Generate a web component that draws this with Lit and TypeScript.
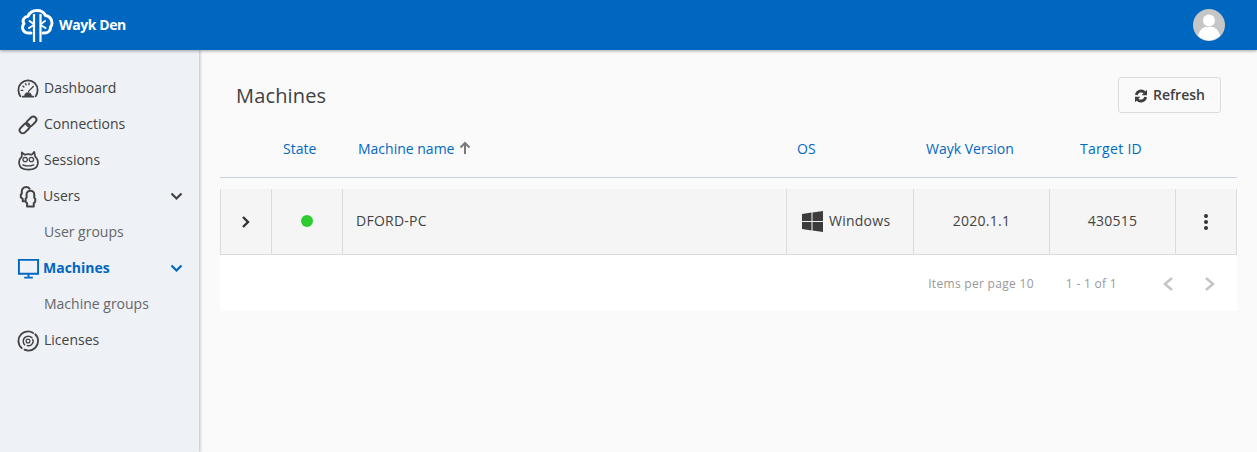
import { LitElement, html, css, svg } from "lit";
import { customElement } from "lit/decorators.js";

const icons: Record<string, unknown> = {
  dashboard: svg`<path d="M3.500 20C2.200 18.200 1.500 16 1.500 13.500 1.500 8 6 3.500 11.500 3.500S21.500 8 21.500 13.500c0 2.500-.7 4.700-2 6.500M6 20.500h11" fill="none" stroke="currentColor" stroke-width="1.900" stroke-linecap="round"/><path d="M12 15l5-5M6 9.500l1.200 1M9 7l.5 1.300M12.500 6.500v1.500M4.500 14h1.500" fill="none" stroke="currentColor" stroke-width="1.400" stroke-linecap="round"/><path d="M7.500 20c0-2.500 1.800-4 4-4s4 1.500 4 4z" fill="currentColor"/>`,
  link: svg`<g fill="none" stroke="currentColor" stroke-width="2" transform="rotate(-45 11.500 12.500)"><rect x="0.500" y="9.200" width="12" height="6.600" rx="3.300"/><rect x="10.500" y="9.200" width="12" height="6.600" rx="3.300"/></g>`,
  owl: svg`<path d="M5 3.500l3 2.500c2.400-.8 5-.8 7.400 0L18 3l1 5c2.200 2 3.100 4.700 2.700 7.500-.6 4-4.500 6-9.700 6s-9.200-2-9.700-6C1.900 12.700 2.800 10 5 8z" fill="none" stroke="currentColor" stroke-width="1.800" stroke-linejoin="round"/><circle cx="8.500" cy="11" r="2.300" fill="none" stroke="currentColor" stroke-width="1.300"/><circle cx="15" cy="11" r="2.300" fill="none" stroke="currentColor" stroke-width="1.300"/><path d="M6 16.500c3.500 1.500 8 1.500 11.500 0" fill="none" stroke="currentColor" stroke-width="1.300" stroke-linecap="round"/>`,
  users: svg`<path d="M7.500 17H6v-2.500l-2-1.800V10l1-1V6.500C5 4 7 2 9.500 2c1.500 0 2.800.7 3.600 1.800" fill="none" stroke="currentColor" stroke-width="2.100" stroke-linejoin="round" stroke-linecap="round"/><path d="M10.500 22.500V19L9 17.500v-3.300l1-1V10c0-2.300 1.900-4 4-4s4 1.700 4 4v3.200l1 1v3.300L17.500 19v3.500z" fill="none" stroke="currentColor" stroke-width="2.100" stroke-linejoin="round"/>`,
  monitor: svg`<path d="M2 3h20v14.500H2z" fill="none" stroke="currentColor" stroke-width="2"/><path d="M12 17.500v4M7.500 21.500h9" fill="none" stroke="currentColor" stroke-width="2"/>`,
  license: svg`<path d="M5 20C2.900 18.100 1.500 15.500 1.500 12.500 1.500 7 6 2.500 11.500 2.500c2 0 3.800.6 5.300 1.600M19 5.500c2 1.800 3 4.300 3 7 0 5.500-4.500 10-10 10-1.500 0-2.900-.3-4.200-.9" fill="none" stroke="currentColor" stroke-width="1.900" stroke-linecap="round"/><path d="M8 16.500c-2-2-2-5.500 0-7.500s5.500-2 7.500 0M16.500 11c.7 2.200 0 4.500-2 5.800-1.200.7-2.500.8-3.700.5" fill="none" stroke="currentColor" stroke-width="1.500" stroke-linecap="round"/><circle cx="11.500" cy="12.500" r="2" fill="none" stroke="currentColor" stroke-width="1.300"/>`,
};

const chevron = html`<svg class="chev" width="14" height="10" viewBox="0 0 14 10"><path d="M1.500 2.500l5 5 5-5" fill="none" stroke="currentColor" stroke-width="2.200"/></svg>`;

const navItems = [
  { label: "Dashboard", icon: "dashboard" },
  { label: "Connections", icon: "link" },
  { label: "Sessions", icon: "owl" },
  { label: "Users", icon: "users", open: true, tight: true },
  { label: "User groups", sub: true },
  { label: "Machines", icon: "monitor", open: true, active: true, tight: true },
  { label: "Machine groups", sub: true },
  { label: "Licenses", icon: "license" },
];

@customElement("app-root")
export class AppRoot extends LitElement {
  static styles = css`
    :host {
      display: block;
      width: 1257px;
      height: 452px;
      overflow: hidden;
      font-family: "Open Sans", sans-serif;
      font-size: 14px;
      color: #434343;
      background: #fafafa;
    }

    .topbar {
      position: relative;
      z-index: 2;
      height: 50px;
      box-sizing: border-box;
      padding: 0 32px 0 20px;
      display: flex;
      align-items: center;
      justify-content: space-between;
      background: #0067c0;
      box-shadow: 0 1px 3px rgba(0, 0, 0, 0.35);
    }

    .brand {
      display: flex;
      align-items: center;
      gap: 4px;
      color: #fff;
      font-size: 14px;
      font-weight: 700;
      letter-spacing: -0.4px;
    }

    .brand span {
      padding-bottom: 2px;
    }

    .body {
      display: flex;
      height: 402px;
    }

    .sidebar {
      flex: none;
      width: 199px;
      box-sizing: border-box;
      padding-top: 19px;
      background: #eef1f6;
      box-shadow: 1px 0 3px rgba(0, 0, 0, 0.25);
    }

    .nav {
      height: 36px;
      display: flex;
      align-items: center;
      padding: 0 15px 0 17px;
      gap: 4px;
    }

    .nav.tight {
      gap: 3px;
    }

    .nav svg.icon {
      flex: none;
      width: 23px;
      height: 23px;
      margin-top: 2px;
    }

    .nav svg.chev {
      margin-top: 2px;
    }

    .nav span {
      flex: 1;
    }

    .nav.sub {
      padding-left: 44px;
      color: #666;
    }

    .nav.active {
      color: #0067c0;
      font-weight: 700;
    }

    .main {
      flex: 1;
      padding: 27px 20px 0 21px;
      min-width: 0;
    }

    .head {
      display: flex;
      align-items: center;
      justify-content: space-between;
      height: 36px;
      padding: 0 16px;
    }

    h1 {
      margin: 0;
      font-size: 20px;
      font-weight: 400;
      letter-spacing: 0.15px;
      color: #404040;
    }

    .refresh {
      display: flex;
      align-items: center;
      justify-content: center;
      gap: 5px;
      width: 103px;
      height: 36px;
      box-sizing: border-box;
      padding: 0 0 2px;
      border: 1px solid #dcdcdc;
      border-radius: 3px;
      background: #fafafa;
      font: 600 14px "Open Sans", sans-serif;
      color: #3f3f3f;
    }

    .refresh svg {
      margin-top: 4px;
    }

    .cols {
      display: grid;
      grid-template-columns: 51px 71px 444px 127px 136px 126px 62px;
    }

    .thead {
      height: 65px;
      box-sizing: border-box;
      border-bottom: 1px solid #c3d3e3;
      align-items: center;
      color: #0069c4;
      padding-top: 6px;
    }

    .thead > div {
      padding-left: 12px;
      display: flex;
      align-items: center;
      gap: 5px;
    }

    .thead > .os {
      padding-left: 11px;
    }

    .thead > .ver {
      padding-left: 13px;
    }

    .thead > .target {
      padding-left: 31px;
      letter-spacing: 0.3px;
    }

    .thead > .name {
      padding-left: 16px;
    }

    .row {
      margin-top: 11px;
      height: 66px;
      box-sizing: border-box;
      background: #f5f5f5;
      border-bottom: 1px solid #dcdcdc;
      border-left: 1px solid #dcdcdc;
      border-right: 1px solid #dcdcdc;
      grid-template-columns: 50px 71px 444px 127px 136px 126px 61px;
      letter-spacing: 0.25px;
    }

    .row > div {
      display: flex;
      align-items: center;
      justify-content: center;
      border-left: 1px solid #dcdcdc;
      padding-bottom: 2px;
    }

    .row > div:first-child,
    .row > div:last-child {
      padding-bottom: 0;
    }

    .row > div:first-child {
      border-left: 0;
    }

    .row > .name {
      justify-content: flex-start;
      padding-left: 13px;
    }

    .row > .os {
      justify-content: flex-start;
      padding-left: 15px;
      gap: 6px;
    }

    .row > .os svg {
      margin-top: 2px;
    }

    .dot {
      width: 12px;
      height: 12px;
      border-radius: 50%;
      background: #2ecc31;
    }

    .pager {
      height: 56px;
      box-sizing: border-box;
      padding: 1px 20px 0 0;
      display: flex;
      align-items: center;
      justify-content: flex-end;
      background: #fff;
      color: #999;
      font-size: 12px;
      letter-spacing: 0.3px;
    }

    .pager .per {
      margin-right: 32px;
    }

    .pager .count {
      margin-right: 45px;
    }

    .pager svg {
      display: block;
    }

    .pager svg + svg {
      margin-left: 27px;
    }
  `;

  render() {
    return html`
      <div class="topbar">
        <div class="brand">
          <svg width="35" height="34" viewBox="0 0 35 34" fill="none" stroke="#fff" stroke-width="3" stroke-linejoin="round" stroke-linecap="round">
            <path d="M11 25H8c-3 0-5.500-2.500-5.500-5.500 0-1.500.5-2.700 1.500-3.700C3 14.500 3 12 4 10.500c1-1.500 2.500-2.300 4-2.300C9.500 4.500 13 2.500 17 2.500s7 2 8.500 5c3 .3 6.500 3 6.500 7.500 0 1.500-.5 3-1.500 4 .3 3-2 6-5.500 6h-2"/>
            <path d="M14 6v28M20.500 6v28" stroke-width="2.200" stroke-linecap="butt"/>
            <path d="M9.500 13l3.500 2.500M9 20l4-2.500M25 13l-3.500 2.500M25.500 20l-4-2.500" stroke-width="2"/>
          </svg>
          <span>Wayk Den</span>
        </div>
        <svg width="32" height="32" viewBox="0 0 32 32">
          <circle cx="16" cy="16" r="16" fill="#c6c6c6"/>
          <circle cx="16" cy="11.500" r="6" fill="#fff"/>
          <path d="M5 27c1-5 4-8 7-9h8c3 1 6 4 7 9a16 16 0 0 1-22 0z" fill="#fff"/>
        </svg>
      </div>
      <div class="body">
        <nav class="sidebar">
          ${navItems.map(
            (item) => html`
              <div class="nav ${item.sub ? "sub" : ""} ${item.active ? "active" : ""} ${item.tight ? "tight" : ""}">
                ${item.icon
                  ? html`<svg class="icon" viewBox="0 0 24 24">${icons[item.icon]}</svg>`
                  : null}
                <span>${item.label}</span>
                ${item.open ? chevron : null}
              </div>
            `
          )}
        </nav>
        <main class="main">
          <div class="head">
            <h1>Machines</h1>
            <button class="refresh">
              <svg width="14" height="14" viewBox="0 0 14 14" fill="none" stroke="currentColor" stroke-width="2.800">
                <path d="M2.300 6a4.900 4.900 0 0 1 8.500-2.300M11.700 8a4.900 4.900 0 0 1-8.500 2.300"/>
                <path d="M13 .8v5.400H7.600zM1 13.200V7.800h5.400z" fill="currentColor" stroke="none"/>
              </svg>
              Refresh
            </button>
          </div>
          <div class="cols thead">
            <div></div>
            <div>State</div>
            <div class="name">
              Machine name
              <svg width="12" height="14" viewBox="0 0 12 14" fill="none" stroke="#7a7a7a" stroke-width="2">
                <path d="M6 13V2M1.500 6.500L6 2l4.500 4.500"/>
              </svg>
            </div>
            <div class="os">OS</div>
            <div class="ver">Wayk Version</div>
            <div class="target">Target ID</div>
            <div></div>
          </div>
          <div class="cols row">
            <div>
              <svg width="10" height="14" viewBox="0 0 10 14" fill="none" stroke="#333" stroke-width="2.400">
                <path d="M2 2l5 5-5 5"/>
              </svg>
            </div>
            <div><span class="dot"></span></div>
            <div class="name">DFORD-PC</div>
            <div class="os">
              <svg width="21" height="21" viewBox="0 0 21 21" fill="#3c3c3c">
                <path d="M0 3l9.500-1.400v8.400H0zM10.500 1.500L21 0v10h-10.500zM0 11h9.500v8.400L0 18zM10.500 11H21v10l-10.500-1.500z"/>
              </svg>
              Windows
            </div>
            <div>2020.1.1</div>
            <div>430515</div>
            <div>
              <svg width="4" height="16" viewBox="0 0 4 16" fill="#333">
                <circle cx="2" cy="2" r="2"/>
                <circle cx="2" cy="8" r="2"/>
                <circle cx="2" cy="14" r="2"/>
              </svg>
            </div>
          </div>
          <div class="pager">
            <span class="per">Items per page 10</span>
            <span class="count">1 - 1 of 1</span>
            <svg width="14" height="16" viewBox="0 0 14 16" fill="none" stroke="#c4c4c4" stroke-width="2.400">
              <path d="M10 2L3 8l7 6"/>
            </svg>
            <svg width="14" height="16" viewBox="0 0 14 16" fill="none" stroke="#c4c4c4" stroke-width="2.400">
              <path d="M3 2l7 6-7 6"/>
            </svg>
          </div>
        </main>
      </div>
    `;
  }
}
